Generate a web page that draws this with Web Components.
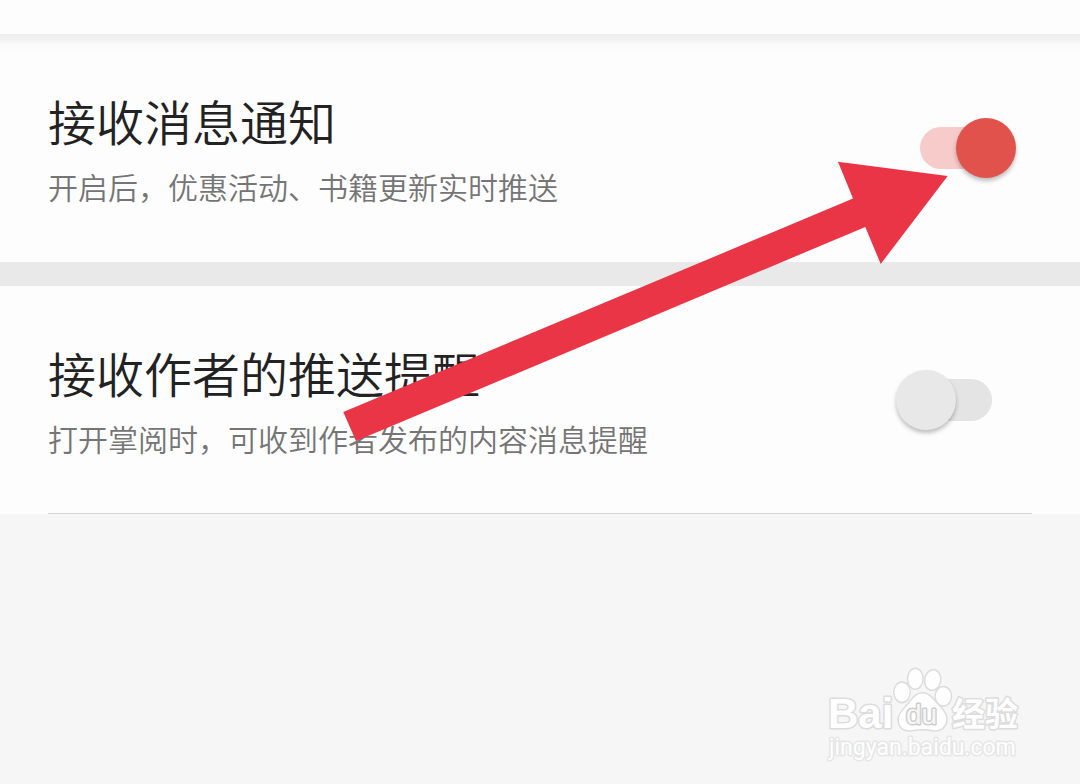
<!DOCTYPE html>
<html lang="zh-CN">
<head>
<meta charset="utf-8">
<meta name="viewport" content="width=device-width, initial-scale=1">
<title>消息通知</title>
<style>
  body { margin: 0; background: #f6f6f6; font-family: "Noto Sans CJK SC", sans-serif; }
</style>
</head>
<body>
<settings-page>
  <setting-row heading="接收消息通知" note="开启后，优惠活动、书籍更新实时推送" checked></setting-row>
  <section-gap></section-gap>
  <setting-row heading="接收作者的推送提醒" note="打开掌阅时，可收到作者发布的内容消息提醒" divider></setting-row>
  <pointer-arrow slot="overlay"></pointer-arrow>
  <brand-mark slot="footer"></brand-mark>
</settings-page>

<script>
class BaseElement extends HTMLElement {
  render(html) {
    const t = document.createElement('template');
    t.innerHTML = html;
    this.attachShadow({ mode: 'open' }).append(t.content.cloneNode(true));
  }
}

customElements.define('settings-page', class extends BaseElement {
  connectedCallback() {
    this.render(`
      <style>
        :host { display: flex; flex-direction: column; min-height: 100vh; position: relative; }
        header { height: 34px; background: #fdfdfd; }
        main { background: #fdfdfd linear-gradient(#ededed, #f2f2f2 6px, #fafafa 10px, #fdfdfd 18px) no-repeat; }
        footer { flex: 1; display: flex; justify-content: flex-end; align-items: flex-end; padding: 0 50px 14px; }
      </style>
      <header></header>
      <main><slot></slot></main>
      <footer><slot name="footer"></slot></footer>
      <slot name="overlay"></slot>`);
  }
});

customElements.define('section-gap', class extends BaseElement {
  connectedCallback() {
    this.render(`<style>:host { display: block; height: 24px; background: #e9e9e9; }</style>`);
  }
});

customElements.define('toggle-switch', class extends BaseElement {
  connectedCallback() {
    this.render(`
      <style>
        :host { display: block; }
        input {
          appearance: none; margin: 0; width: 120px; height: 60px; cursor: pointer;
          display: grid; align-items: center;
        }
        input::before, input::after { content: ""; grid-area: 1 / 1; }
        input::before { width: 72px; height: 42px; border-radius: 21px; background: #e4e4e4; justify-self: center; }
        input::after {
          width: 60px; height: 60px; border-radius: 50%; background: #e8e8e8;
          justify-self: start; box-shadow: 0 3px 4px rgba(0, 0, 0, .25);
        }
        input:checked::before { background: #f6cbca; }
        input:checked::after { background: #e2524c; justify-self: end; }
      </style>
      <input type="checkbox" role="switch">`);
    const input = this.shadowRoot.querySelector('input');
    input.checked = this.hasAttribute('checked');
    input.setAttribute('aria-label', this.getAttribute('label'));
  }
});

customElements.define('setting-row', class extends BaseElement {
  connectedCallback() {
    this.render(`
      <style>
        :host { display: block; position: relative; }
        .row { display: flex; align-items: center; justify-content: space-between; min-height: 228px; padding: 0 64px 0 48px; }
        .text { display: grid; gap: 10px; padding-bottom: 6px; }
        h2 { margin: 0; font-size: 48px; line-height: 72px; font-weight: 350; color: #222; }
        p { margin: 0; font-size: 30px; line-height: 40px; font-weight: 350; color: #757575; }
        hr { position: absolute; left: 48px; right: 48px; bottom: 0; margin: 0; border: 0; height: 1px; background: #d6d6d6; }
      </style>
      <div class="row">
        <div class="text"><h2></h2><p></p></div>
      </div>`);
    const $ = s => this.shadowRoot.querySelector(s);
    $('h2').textContent = this.getAttribute('heading');
    $('p').textContent = this.getAttribute('note');
    const toggle = document.createElement('toggle-switch');
    toggle.setAttribute('label', this.getAttribute('heading'));
    if (this.hasAttribute('checked')) toggle.setAttribute('checked', '');
    $('.row').append(toggle);
    if (this.hasAttribute('divider')) this.shadowRoot.append(document.createElement('hr'));
  }
});

customElements.define('pointer-arrow', class extends BaseElement {
  connectedCallback() {
    this.render(`
      <style>
        :host { position: absolute; top: 160px; right: 130px; pointer-events: none; }
        svg { display: block; }
      </style>
      <svg width="610" height="284" viewBox="340 160 610 284" aria-hidden="true">
        <polygon fill="#ea3546" points="343.3,412 853,198.6 838,161.7 947.7,176 880.7,264 865.3,227 356,441"/>
      </svg>`);
  }
});

customElements.define('brand-mark', class extends BaseElement {
  connectedCallback() {
    this.render(`
      <style>
        :host { display: block; }
        svg { display: block; }
        .shape, text { fill: #fefefe; stroke: #dcdcdc; stroke-width: 3px; paint-order: stroke; stroke-linejoin: round; }
        .latin { font: 700 42px "Liberation Sans", sans-serif; }
        .du { font: 400 28px "Liberation Sans", sans-serif; fill: #f6f6f6; stroke: #cecece; }
        .cjk { font: 700 33px "Noto Sans CJK SC", sans-serif; }
        .url { font: 400 23px Roboto, sans-serif; stroke: #e6e6e6; }
      </style>
      <svg width="210" height="110" viewBox="0 0 210 110">
        <text class="latin" x="8" y="68">Bai</text>
        <g class="shape">
          <ellipse cx="82" cy="32.3" rx="7.5" ry="9.5"/>
          <ellipse cx="95.3" cy="18.7" rx="7" ry="9.8"/>
          <ellipse cx="112.7" cy="20" rx="7.3" ry="9.6" transform="rotate(10 112.7 20)"/>
          <ellipse cx="123.3" cy="36.3" rx="7.5" ry="9"/>
          <path d="M102.5 33.5C110 33.5 114 41 119 46C124 51 127 56 126 61C125 68 119 71 113 70C106 68.5 99 68.5 92 70C85 71 79.5 68 79 61C78.5 55 82 51 86 47C92 41 95 33.5 102.5 33.5Z"/>
        </g>
        <text class="du" x="86" y="64">du</text>
        <text class="cjk" x="132" y="66">经验</text>
        <text class="url" x="9" y="95">jingyan.baidu.com</text>
      </svg>`);
  }
});
</script>
</body>
</html>
